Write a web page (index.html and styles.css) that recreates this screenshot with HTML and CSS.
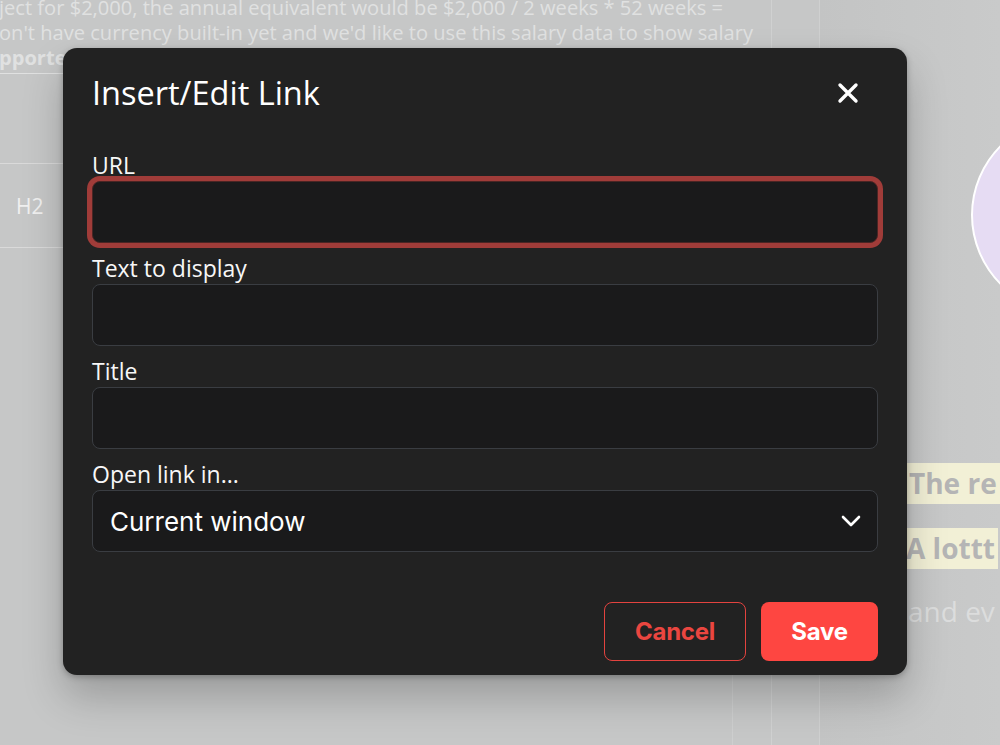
FILE: index.html
```html
<!DOCTYPE html>
<html lang="en">
<head>
<meta charset="utf-8">
<title>Insert/Edit Link</title>
<link rel="stylesheet" href="styles.css">
</head>
<body>
<div class="page">
  <div class="main">
    <p class="para">ject for $2,000, the annual equivalent would be $2,000 / 2 weeks * 52 weeks =<br>on't have currency built-in yet and we'd like to use this salary data to show salary<br><a class="para-link">pporte</a></p>
    <div class="table">
      <div class="row row-top"></div>
      <div class="row row-h2"><span class="cell">H2</span></div>
    </div>
    <div class="rest"></div>
  </div>
  <div class="gutter"></div>
  <div class="side">
    <div class="avatar"></div>
    <div class="hl-line"><span class="hl">The re</span></div>
    <div class="hl-line hl-line-2"><span class="hl">A lottt</span></div>
    <p class="side-text">and ev</p>
  </div>
</div>

<div class="dialog" role="dialog" aria-label="Insert/Edit Link">
  <div class="dialog-head">
    <h1 class="dialog-title">Insert/Edit Link</h1>
    <button class="close" aria-label="Close">
      <svg width="22" height="22" viewBox="0 0 22 22"><path d="M3 3 L19 19 M19 3 L3 19" stroke="#fff" stroke-width="3.4" stroke-linecap="round" fill="none"/></svg>
    </button>
  </div>
  <div class="fields">
    <div class="field">
      <label class="label">URL</label>
      <div class="input input-focus"></div>
    </div>
    <div class="field">
      <label class="label">Text to display</label>
      <div class="input"></div>
    </div>
    <div class="field">
      <label class="label">Title</label>
      <div class="input"></div>
    </div>
    <div class="field">
      <label class="label">Open link in...</label>
      <div class="input select">
        <span class="select-value">Current window</span>
        <svg class="chevron" width="20" height="12" viewBox="0 0 20 12"><path d="M2 2 L10 10 L18 2" stroke="#fff" stroke-width="2.6" stroke-linecap="round" stroke-linejoin="round" fill="none"/></svg>
      </div>
    </div>
  </div>
  <div class="dialog-foot">
    <button class="btn btn-cancel">Cancel</button>
    <button class="btn btn-save">Save</button>
  </div>
</div>
</body>
</html>
```

FILE: styles.css
```css
* { box-sizing: border-box; }
html, body {
  margin: 0;
  padding: 0;
  width: 1000px;
  height: 745px;
  overflow: hidden;
  background: #c6c7c7;
  font-family: "Open Sans", "Noto Sans", sans-serif;
}

.page {
  display: flex;
  height: 745px;
  overflow: hidden;
  position: relative;
}

.main {
  width: 772px;
  flex: none;
  display: flex;
  flex-direction: column;
  border-right: 1px solid rgba(255,255,255,0.18);
}

.para {
  margin: -5px 0 0 -1px;
  font-size: 20.1px;
  line-height: 25px;
  color: #e0e1e1;
  white-space: nowrap;
}

.para-link {
  font-weight: 700;
  text-decoration: underline;
  text-decoration-thickness: 1px;
  text-underline-offset: 8px;
}

.table {
  display: flex;
  flex-direction: column;
}
.row {
  border-bottom: 1px solid rgba(255,255,255,0.35);
}
.row-top { height: 94px; }
.row-h2 {
  height: 84px;
  display: flex;
  align-items: center;
  padding-left: 16px;
  font-size: 21px;
  color: #f0f0f0;
}

.rest {
  flex: 1;
  width: 733px;
  border-right: 1px solid rgba(255,255,255,0.14);
}

.gutter {
  width: 48px;
  flex: none;
  border-right: 1px solid rgba(255,255,255,0.16);
}

.side {
  flex: 1;
  min-width: 0;
  overflow: hidden;
  background: linear-gradient(90deg, #c3c4c4, #c9caca);
}

.avatar {
  width: 204px;
  height: 200px;
  margin: 115px 0 0 151px;
  border-radius: 50%;
  background: #e6dcf3;
  border: 2.5px solid #ffffff;
}

.hl-line {
  margin: 148px 0 0 86px;
  height: 41px;
  white-space: nowrap;
}
.hl-line-2 { margin-top: 24px; }
.hl {
  display: inline-block;
  height: 41px;
  line-height: 41px;
  padding: 0 3px;
  background: #f2f0d6;
  color: #b5b5b5;
  font-weight: 700;
  font-size: 28px;
}
.hl-line-2 .hl { padding-left: 0; }

.side-text {
  margin: 22px 0 0 88px;
  font-size: 28px;
  line-height: 40px;
  color: #dcdddd;
  white-space: nowrap;
}

/* Dialog */
.dialog {
  position: absolute;
  left: 63px;
  top: 48px;
  width: 844px;
  background: #222222;
  border-radius: 14px;
  padding: 25px 29px 14px 29px;
  box-shadow: 0 22px 40px rgba(0,0,0,0.22), 0 2px 6px rgba(0,0,0,0.25);
  color: #f7f7f7;
}

.dialog-head {
  display: flex;
  align-items: center;
  justify-content: space-between;
}
.dialog-title {
  margin: 0;
  font-size: 32.5px;
  line-height: 40px;
  font-weight: 400;
  color: #ffffff;
}
.close {
  width: 22px;
  height: 40px;
  margin-right: 19px;
  padding: 0;
  border: none;
  background: transparent;
  display: flex;
  align-items: center;
  justify-content: center;
}

.fields {
  margin-top: 38px;
  display: flex;
  flex-direction: column;
  gap: 11px;
}
.field {
  display: flex;
  flex-direction: column;
  gap: 2px;
}
.label {
  font-size: 23px;
  line-height: 28px;
  color: #f7f7f7;
}
.input {
  height: 62px;
  background: #1a1a1b;
  border: 1px solid #3a3d42;
  border-radius: 8px;
}
.input-focus {
  border-color: #4a2524;
  box-shadow: 0 0 0 5px #a03c39;
}
.select {
  display: flex;
  align-items: center;
  justify-content: space-between;
  padding: 0 16px 0 17px;
}
.select-value {
  font-family: "Inter", "Liberation Sans", sans-serif;
  font-size: 26px;
  color: #ffffff;
}
.chevron { display: block; }

.dialog-foot {
  margin-top: 50px;
  display: flex;
  justify-content: flex-end;
  gap: 15px;
}
.btn {
  height: 59px;
  padding: 0;
  border-radius: 8px;
  font-family: "Inter", "Liberation Sans", sans-serif;
  font-size: 24px;
  font-weight: 700;
  letter-spacing: -0.3px;
}
.btn-cancel {
  background: transparent;
  border: 1.5px solid #e3433f;
  color: #ea4640;
  width: 142px;
}
.btn-save {
  background: #fe4641;
  border: none;
  color: #ffffff;
  width: 117px;
}
```
